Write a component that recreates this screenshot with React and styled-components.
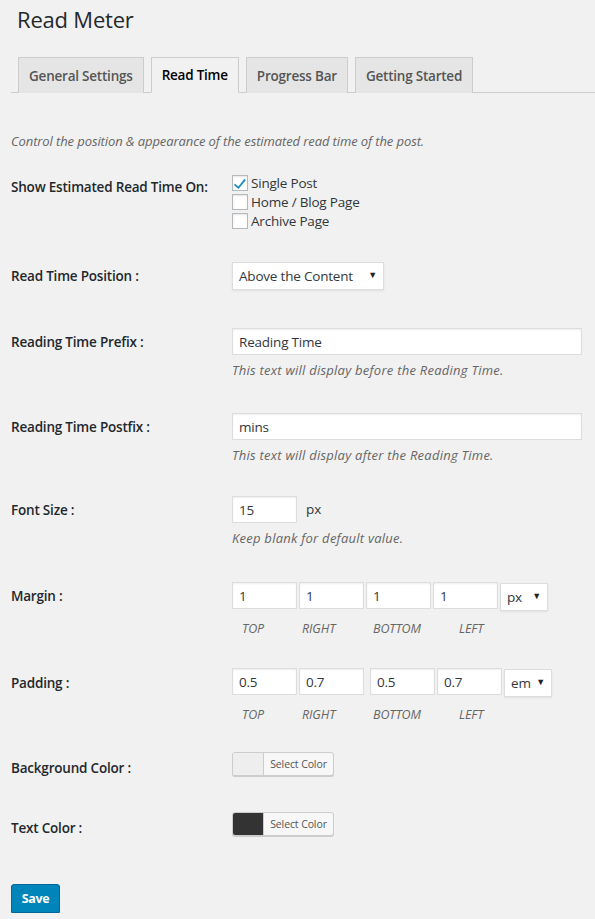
import React from 'react';
import styled, { createGlobalStyle } from 'styled-components';

const GlobalStyle = createGlobalStyle`
  html, body {
    margin: 0;
    padding: 0;
    background: #f1f1f1;
  }
  body {
    font-family: "Open Sans", "Noto Sans", sans-serif;
    color: #23282d;
    font-size: 13px;
  }
`;

const Wrap = styled.div`
  padding: 0 0 0 11px;
  width: 584px;
`;

const Title = styled.h1`
  margin: 0 0 0 6px;
  padding: 5px 0 0;
  font-size: 22px;
  font-weight: 400;
  line-height: 29px;
  color: #23282d;
  letter-spacing: -0.2px;
`;

const TabBar = styled.div`
  display: flex;
  margin-top: 23px;
  border-bottom: 1px solid #ccc;
  height: 35px;
  padding-left: 7px;
  gap: 7px;
`;

const Tab = styled.div`
  box-sizing: border-box;
  height: 36px;
  padding: 0 10px;
  display: flex;
  align-items: center;
  border: 1px solid #ccc;
  border-bottom: ${p => (p.$active ? '1px solid #f1f1f1' : 'none')};
  background: ${p => (p.$active ? '#f1f1f1' : '#e5e5e5')};
  color: ${p => (p.$active ? '#000' : '#555')};
  font-size: 13.5px;
  font-weight: 600;
  letter-spacing: -0.22px;
`;

const Intro = styled.p`
  margin: 39px 0 8px;
  font-size: 13px;
  font-style: italic;
  color: #666;
  line-height: 18px;
  letter-spacing: -0.1px;
`;

const Row = styled.div`
  display: grid;
  grid-template-columns: 221px 1fr;
  height: ${p => p.$h}px;
`;

const Label = styled.div`
  padding-top: 20px;
  font-size: 13.5px;
  font-weight: 600;
  line-height: 18px;
  letter-spacing: -0.2px;
  color: #23282d;
`;

const Field = styled.div`
  padding-top: ${p => p.$top ?? 15}px;
`;

const CheckList = styled.div`
  display: flex;
  flex-direction: column;
  gap: 3px;
  padding-top: 1px;
`;

const CheckRow = styled.label`
  display: flex;
  align-items: center;
  gap: 3px;
  font-size: 13.5px;
  line-height: 16px;
  color: #32373c;
  letter-spacing: -0.2px;
`;

const Box = styled.span`
  box-sizing: border-box;
  width: 16px;
  height: 16px;
  border: 1px solid #b4b9be;
  background: #fff;
  box-shadow: inset 0 1px 2px rgba(0, 0, 0, 0.1);
  display: flex;
  align-items: center;
  justify-content: center;
`;

const Select = styled.div`
  box-sizing: border-box;
  width: ${p => p.$w}px;
  height: 28px;
  border: 1px solid #ddd;
  background: #fff;
  box-shadow: 0 1px 2px rgba(0, 0, 0, 0.07);
  display: flex;
  align-items: center;
  justify-content: space-between;
  padding: 0 6px 0 6px;
  font-size: 13.5px;
  color: #32373c;
  letter-spacing: -0.2px;
  margin-top: ${p => p.$mt ?? 0}px;
  margin-left: ${p => p.$ml ?? 0}px;
`;

const Arrow = styled.span`
  font-size: 9px;
  color: #222;
  margin-bottom: 3px;
`;

const Input = styled.div`
  box-sizing: border-box;
  width: ${p => p.$w}px;
  height: 27px;
  border: 1px solid #ddd;
  background: #fff;
  box-shadow: inset 0 1px 2px rgba(0, 0, 0, 0.07);
  display: flex;
  align-items: center;
  padding: 0 6px;
  font-size: 13.5px;
  color: #32373c;
  letter-spacing: -0.2px;
  margin-left: ${p => p.$ml ?? 0}px;
`;

const Hint = styled.p`
  margin: 6px 0 0;
  font-size: 13px;
  font-style: italic;
  color: #666;
  line-height: 18px;
  letter-spacing: 0.25px;
`;

const Inline = styled.div`
  display: flex;
  align-items: flex-start;
`;

const Unit = styled.span`
  margin-left: 9px;
  line-height: 27px;
  font-size: 13.5px;
  color: #32373c;
`;

const SideLabels = styled.div`
  display: flex;
  margin-top: 10px;
`;

const SideLabel = styled.span`
  box-sizing: border-box;
  width: ${p => p.$w}px;
  padding-left: ${p => p.$pl ?? 0}px;
  font-size: 12.5px;
  font-style: italic;
  color: #666;
  line-height: 16px;
  letter-spacing: -0.1px;
`;

const ColorButton = styled.div`
  box-sizing: border-box;
  display: flex;
  width: 102px;
  height: 24px;
  border: 1px solid #ccc;
  border-radius: 3px;
  background: #f7f7f7;
  box-shadow: 0 1px 0 #ccc;
  overflow: hidden;
`;

const Swatch = styled.span`
  width: 30px;
  background: ${p => p.$color};
  border-right: 1px solid #ccc;
`;

const SwatchText = styled.span`
  flex: 1;
  display: flex;
  align-items: center;
  justify-content: center;
  font-size: 10.5px;
  color: #555;
  letter-spacing: -0.1px;
`;

const SaveButton = styled.button`
  margin-top: 24px;
  height: 29px;
  width: 49px;
  padding: 0;
  border: 1px solid #006799;
  border-radius: 3px;
  background: #0085ba;
  box-shadow: 0 1px 0 #006799;
  color: #fff;
  font-family: "Open Sans", "Noto Sans", sans-serif;
  font-weight: 700;
  font-size: 12.5px;
  letter-spacing: -0.3px;
`;

const Check = () => (
  <svg width="15" height="15" viewBox="0 0 20 20">
    <path d="M3 10.2 L7.6 14.4 L16.3 3.2 L18.4 5 L7.8 17.8 L1.4 12.2 Z" fill="#1e8cbe" />
  </svg>
);

const CheckItem = ({ checked, children }) => (
  <CheckRow>
    <Box>{checked && <Check />}</Box>
    {children}
  </CheckRow>
);

const BoxInputs = ({ values, unit, thirdGap }) => (
  <>
    <Inline>
      <Input $w={65}>{values[0]}</Input>
      <Input $w={65} $ml={2}>{values[1]}</Input>
      <Input $w={65} $ml={thirdGap}>{values[2]}</Input>
      <Input $w={65} $ml={2}>{values[3]}</Input>
      <Select $w={48} $ml={2} $mt={1}>
        {unit}
        <Arrow>▼</Arrow>
      </Select>
    </Inline>
    <SideLabels>
      <SideLabel $w={70} $pl={10}>TOP</SideLabel>
      <SideLabel $w={71}>RIGHT</SideLabel>
      <SideLabel $w={86}>BOTTOM</SideLabel>
      <SideLabel $w={60}>LEFT</SideLabel>
    </SideLabels>
  </>
);

const tabs = ['General Settings', 'Read Time', 'Progress Bar', 'Getting Started'];

export default function App() {
  return (
    <Wrap>
      <GlobalStyle />
      <Title>Read Meter</Title>
      <TabBar>
        {tabs.map(t => (
          <Tab key={t} $active={t === 'Read Time'}>{t}</Tab>
        ))}
      </TabBar>
      <Intro>Control the position &amp; appearance of the estimated read time of the post.</Intro>

      <Row $h={89}>
        <Label>Show Estimated Read Time On:</Label>
        <Field $top={16}>
          <CheckList>
            <CheckItem checked>Single Post</CheckItem>
            <CheckItem>Home / Blog Page</CheckItem>
            <CheckItem>Archive Page</CheckItem>
          </CheckList>
        </Field>
      </Row>

      <Row $h={66}>
        <Label>Read Time Position :</Label>
        <Field>
          <Select $w={152}>
            Above the Content
            <Arrow>▼</Arrow>
          </Select>
        </Field>
      </Row>

      <Row $h={85}>
        <Label>Reading Time Prefix :</Label>
        <Field>
          <Input $w={350}>Reading Time</Input>
          <Hint>This text will display before the Reading Time.</Hint>
        </Field>
      </Row>

      <Row $h={83}>
        <Label>Reading Time Postfix :</Label>
        <Field>
          <Input $w={350}>mins</Input>
          <Hint>This text will display after the Reading Time.</Hint>
        </Field>
      </Row>

      <Row $h={86}>
        <Label>Font Size :</Label>
        <Field>
          <Inline>
            <Input $w={65}>15</Input>
            <Unit>px</Unit>
          </Inline>
          <Hint>Keep blank for default value.</Hint>
        </Field>
      </Row>

      <Row $h={87}>
        <Label>Margin :</Label>
        <Field>
          <BoxInputs values={['1', '1', '1', '1']} unit="px" thirdGap={2} />
        </Field>
      </Row>

      <Row $h={85}>
        <Label>Padding :</Label>
        <Field $top={14}>
          <BoxInputs values={['0.5', '0.7', '0.5', '0.7']} unit="em" thirdGap={6} />
        </Field>
      </Row>

      <Row $h={60}>
        <Label>Background Color :</Label>
        <Field $top={13}>
          <ColorButton>
            <Swatch $color="#eeeeee" />
            <SwatchText>Select Color</SwatchText>
          </ColorButton>
        </Field>
      </Row>

      <Row $h={61}>
        <Label>Text Color :</Label>
        <Field $top={13}>
          <ColorButton>
            <Swatch $color="#333333" />
            <SwatchText>Select Color</SwatchText>
          </ColorButton>
        </Field>
      </Row>

      <SaveButton>Save</SaveButton>
    </Wrap>
  );
}
